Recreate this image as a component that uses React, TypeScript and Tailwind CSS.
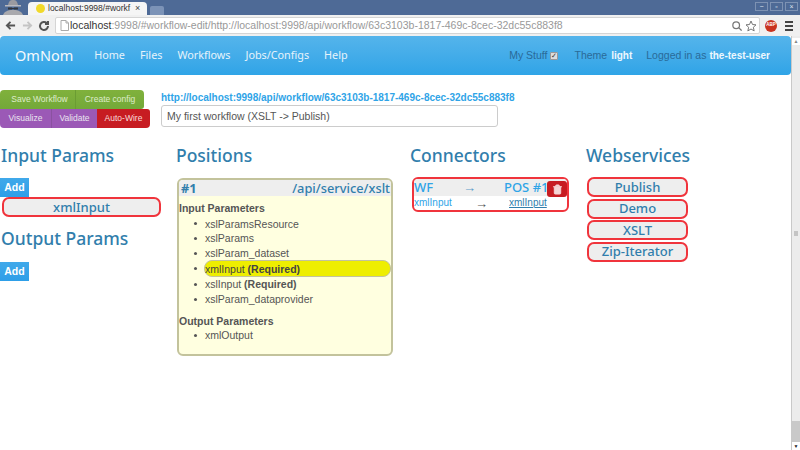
import { Trash2 } from "lucide-react";

const HEAD = "font-['Noto_Sans',sans-serif]";

const H2 = ({ children, className = "" }: { children: React.ReactNode; className?: string }) => (
  <h2 className={`${HEAD} text-[17.5px] leading-[28px] font-medium text-[#317eac] ${className}`}>{children}</h2>
);

const AddButton = () => (
  <button className="block h-[19px] w-[29px] bg-gradient-to-b from-[#40a9ea] to-[#2d9ee8] text-center text-[10.5px] font-bold leading-[19px] text-white">
    Add
  </button>
);

const Pill = ({ label }: { label: string }) => (
  <div className={`${HEAD} flex h-[20px] items-center justify-center rounded-[7px] border-2 border-[#f0343c] bg-[#eeeeee] text-[13px] font-medium leading-none text-[#317eac]`}>
    {label}
  </div>
);

const WinButton = ({ glyph }: { glyph: string }) => (
  <span className="flex h-[9px] w-[13px] items-center justify-center border border-[#7d92b3] text-[7px] leading-none text-[#dfe5ee]">{glyph}</span>
);

const Chrome = () => (
  <div className="h-[36px] font-['Liberation_Sans',sans-serif]">
    <div className="flex h-[15px] items-end bg-[#4e6a96]">
      <div className="ml-[3px] flex h-[15px] w-[20px] items-center justify-center">
        <svg width="20" height="15" viewBox="0 0 20 15">
          <path d="M0 15c1-3 4-5 10-5s9 2 10 5z" fill="#a9a9ad" />
          <path d="M5 5c1-4 2-5 5-5s4 1 5 5z" fill="#9a9aa0" />
          <path d="M2 5h16v1.500H2z" fill="#b9b9be" />
          <path d="M5 7.500h4v2H5zM11 7.500h4v2h-4zM9 8h2v1H9z" fill="#33363c" />
        </svg>
      </div>
      <div className="ml-[5px] flex h-[13px] w-[119px] items-center rounded-t-[4px] bg-[#f5f5f5] pl-[8px]">
        <span className="h-[9px] w-[9px] shrink-0 rounded-full bg-[#f1d92a]" />
        <span className="ml-[3px] w-[84px] shrink-0 whitespace-nowrap text-[8.5px] leading-[13px] text-[#333]">localhost:9998/#workf</span>
        <span className="ml-[3px] text-[9px] leading-none text-[#444]">×</span>
      </div>
      <div className="ml-[3px] h-[9px] w-[14px] rounded-t-[2px] bg-[#7c93b7]" />
      <div className="ml-auto mr-[2px] flex gap-[2px] self-start pt-[2px]">
        <WinButton glyph="−" />
        <WinButton glyph="▫" />
        <WinButton glyph="×" />
      </div>
    </div>
    <div className="flex h-[21px] items-center bg-[#f0f0f0]">
      <svg className="ml-[5px] shrink-0" width="11" height="11" viewBox="0 0 24 24" fill="none" stroke="#555" strokeWidth="4"><path d="M22 12H4M12 4l-8 8 8 8" /></svg>
      <svg className="ml-[6px] shrink-0" width="11" height="11" viewBox="0 0 24 24" fill="none" stroke="#c4c4c4" strokeWidth="4"><path d="M2 12h18M12 4l8 8-8 8" /></svg>
      <svg className="ml-[5px] shrink-0" width="12" height="12" viewBox="0 0 24 24" fill="none" stroke="#555" strokeWidth="4"><path d="M20 12a8 8 0 1 1-2.500-5.800M20 2v6h-6" /></svg>
      <div className="ml-[5px] flex h-[17px] w-[705px] shrink-0 items-center rounded-[2px] border border-[#d5d5d5] bg-white pl-[4px]">
        <svg className="shrink-0" width="9" height="11" viewBox="0 0 9 11" fill="none" stroke="#aaa"><path d="M1 .5h5l2.500 2.500v7.500h-7.500zM6 .5v2.500h2.500" /></svg>
        <span className="ml-[1px] whitespace-nowrap text-[10.5px] leading-none text-[#999]">
          <span className="text-[#333]">localhost</span>:9998/#workflow-edit/http://localhost:9998/api/workflow/63c3103b-1817-469c-8cec-32dc55c883f8
        </span>
        <svg className="ml-auto shrink-0" width="10" height="10" viewBox="0 0 24 24" fill="none" stroke="#777" strokeWidth="3"><circle cx="10" cy="10" r="8" /><path d="M16 16l7 7" /></svg>
        <svg className="ml-[3px] mr-[2px] shrink-0" width="12" height="12" viewBox="0 0 24 24" fill="#fff" stroke="#777" strokeWidth="2"><path d="M12 2l3 7 7 .7-5.300 4.800 1.600 7.300-6.300-3.800-6.300 3.800 1.600-7.300-5.300-4.800 7-.7z" /></svg>
      </div>
      <span className="ml-[5px] flex h-[12px] w-[12px] shrink-0 items-center justify-center rounded-full bg-[#c9331f] text-[4.500px] font-bold leading-none text-white">ABP</span>
      <div className="ml-[8px] flex w-[8px] shrink-0 flex-col gap-[2px]">
        <span className="h-[2px] bg-[#444]" />
        <span className="h-[2px] bg-[#444]" />
        <span className="h-[2px] bg-[#444]" />
      </div>
    </div>
  </div>
);

const Navbar = () => (
  <div className={`${HEAD} flex h-[39px] items-center rounded-[4px] bg-gradient-to-b from-[#54b4eb] to-[#2fa4e7] text-white`}>
    <span className="ml-[15px] text-[14.5px] leading-none text-[#f4fafd]">OmNom</span>
    <nav className="ml-[21px] flex gap-[15px] text-[10.8px] leading-none text-[#e6f3fb]">
      <span>Home</span>
      <span>Files</span>
      <span>Workflows</span>
      <span>Jobs/Configs</span>
      <span>Help</span>
    </nav>
    <div className="ml-auto mr-[21px] flex items-center font-['Liberation_Sans',sans-serif] text-[10.5px] leading-none text-[#2a6a98]">
      <span>My Stuff</span>
      <span className="ml-[3px] flex h-[8px] w-[8px] items-center justify-center rounded-[1px] border border-[#999] bg-[#ddd] text-[7px] leading-none text-[#333]">✓</span>
      <span className="ml-[16px]">Theme</span>
      <span className="ml-[4px] text-[10px] font-bold text-[#eef8fe]">light</span>
      <span className="ml-[14px]">Logged in as</span>
      <span className="ml-[3px] text-[10px] font-bold text-[#eef8fe]">the-test-user</span>
    </div>
  </div>
);

const Toolbar = () => (
  <div className="flex h-[38px] text-[8.5px] leading-none text-[#e9e4ef]">
    <div className="w-[150px]">
      <div className="flex h-[19px] w-[144px] overflow-hidden rounded-t-[4px] rounded-br-[3px] bg-gradient-to-b from-[#80b13c] to-[#73a839] text-[#dfeccb]">
        <span className="flex w-[76px] items-center justify-center border-r border-[#6b9c33] pl-[4px]">Save Workflow</span>
        <span className="flex flex-1 items-center justify-center">Create config</span>
      </div>
      <div className="flex h-[19px] w-[150px] overflow-hidden rounded-b-[4px] rounded-tr-[3px]">
        <span className="flex w-[52px] items-center justify-center border-r border-[#8a52a0] bg-[#9b59b6]">Visualize</span>
        <span className="flex w-[45px] items-center justify-center bg-[#9b59b6]">Validate</span>
        <span className="flex flex-1 items-center justify-center bg-[#c71c22] text-[#f8dcdc]">Auto-Wire</span>
      </div>
    </div>
    <div className="ml-[11px] w-[337px]">
      <a className="block h-[15px] whitespace-nowrap text-[10px] font-bold leading-[15px] text-[#2fa4e7]">
        http://localhost:9998/api/workflow/63c3103b-1817-469c-8cec-32dc55c883f8
      </a>
      <div className="flex h-[22px] items-center rounded-[3px] border border-[#cccccc] bg-white pl-[5px] text-[10.5px] text-[#555]">
        My first workflow (XSLT -&gt; Publish)
      </div>
    </div>
  </div>
);

const Item = ({ children }: { children: React.ReactNode }) => (
  <li className="flex items-center pl-[15px]">
    <span className="h-[3px] w-[3px] rounded-full bg-[#555]" />
    <span className="ml-[8px] flex items-center">{children}</span>
  </li>
);

const Positions = () => (
  <div className="ml-[1px] mt-[9px] h-[178px] w-[216px] overflow-hidden rounded-[6px] border-2 border-[#c3c39c] bg-[#ffffe0] font-['Liberation_Sans',sans-serif] text-[10.5px] leading-[14.6px] text-[#555]">
    <div className={`${HEAD} flex h-[16px] items-center justify-between bg-[#eeeeee] pl-[2px] text-[12.8px] font-medium leading-none text-[#317eac]`}>
      <span className="font-bold">#1</span>
      <span className="pr-[1px]">/api/service/xslt</span>
    </div>
    <div className="mt-[5px] font-bold">Input Parameters</div>
    <ul className="mt-[1px]">
      {["xslParamsResource", "xslParams", "xslParam_dataset"].map((p) => (
        <Item key={p}>{p}</Item>
      ))}
      <Item>
        <span className="-ml-[1px] flex h-[17px] w-[187px] items-center rounded-[8px] border border-[#c3c39c] bg-[#eeee00] text-[#444]">
          xmlInput&nbsp;<b>(Required)</b>
        </span>
      </Item>
      <Item>
        xslInput&nbsp;<b>(Required)</b>
      </Item>
      <Item>xslParam_dataprovider</Item>
    </ul>
    <div className="mt-[7px] font-bold">Output Parameters</div>
    <ul>
      <Item>xmlOutput</Item>
    </ul>
  </div>
);

const Connector = () => (
  <div className="relative ml-[2px] mt-[8px] h-[35px] w-[157px] overflow-hidden rounded-[6px] border-2 border-[#f0343c] bg-white">
    <div className={`${HEAD} flex h-[17px] items-center whitespace-nowrap bg-[#eeeeee] text-[13px] font-medium leading-none text-[#2fa4e7]`}>
      <span className="w-[49px]">WF</span>
      <span className="w-[41px] text-[#5c9bc9]">→</span>
      <span>POS #1</span>
    </div>
    <div className="flex h-[14px] items-center font-['Liberation_Sans',sans-serif] text-[10px] leading-none text-[#2fa4e7]">
      <span className="w-[61px]">xmlInput</span>
      <span className="w-[34px] text-[13px] text-[#555]">→</span>
      <span className="text-[#317eac] underline">xmlInput</span>
    </div>
    <span className="absolute right-0 top-[2px] flex h-[16px] w-[20px] items-center justify-center rounded-[3px] bg-[#c71c22]">
      <Trash2 size={11} color="#f5d5d5" fill="#f5d5d5" />
    </span>
  </div>
);

const Scrollbar = () => (
  <div className="flex h-[414px] w-[9px] shrink-0 flex-col border-l border-[#c9c9c9] bg-[#ececec] pt-[2px]">
    <span className="flex h-[7px] items-center justify-center bg-white text-[5px] leading-none text-[#888]">▲</span>
    <div className="flex flex-1 items-center justify-center">
      <span className="h-[5px] w-[4px] bg-[#c4c4c4]" />
    </div>
    <span className="h-[21px] bg-[#c9c9c9]" />
    <span className="flex h-[8px] items-center justify-center bg-white text-[5px] leading-none text-[#222]">▼</span>
  </div>
);

export default function App() {
  return (
    <div className="h-[450px] w-[800px] overflow-hidden bg-white font-['Liberation_Sans',sans-serif]">
      <Chrome />
      <div className="flex h-[414px]">
        <div className="w-[791px]">
          <Navbar />
          <div className="pt-[15px]">
            <Toolbar />
            <div className="mt-[13px] flex">
              <section className="ml-[1px] w-[175px]">
                <H2>Input Params</H2>
                <div className="mt-[9px] -ml-[1px]"><AddButton /></div>
                <div className="ml-[1px] w-[159px]"><Pill label="xmlInput" /></div>
                <H2 className="mt-[7px]">Output Params</H2>
                <div className="mt-[10px] -ml-[1px]"><AddButton /></div>
              </section>
              <section className="w-[234px]">
                <H2>Positions</H2>
                <Positions />
              </section>
              <section className="w-[176px]">
                <H2>Connectors</H2>
                <Connector />
              </section>
              <section className="w-[110px]">
                <H2>Webservices</H2>
                <div className="mt-[8px] flex w-[102px] flex-col gap-[1.5px] pl-[1px]">
                  {["Publish", "Demo", "XSLT", "Zip-Iterator"].map((w) => (
                    <Pill key={w} label={w} />
                  ))}
                </div>
              </section>
            </div>
          </div>
        </div>
        <Scrollbar />
      </div>
    </div>
  );
}
